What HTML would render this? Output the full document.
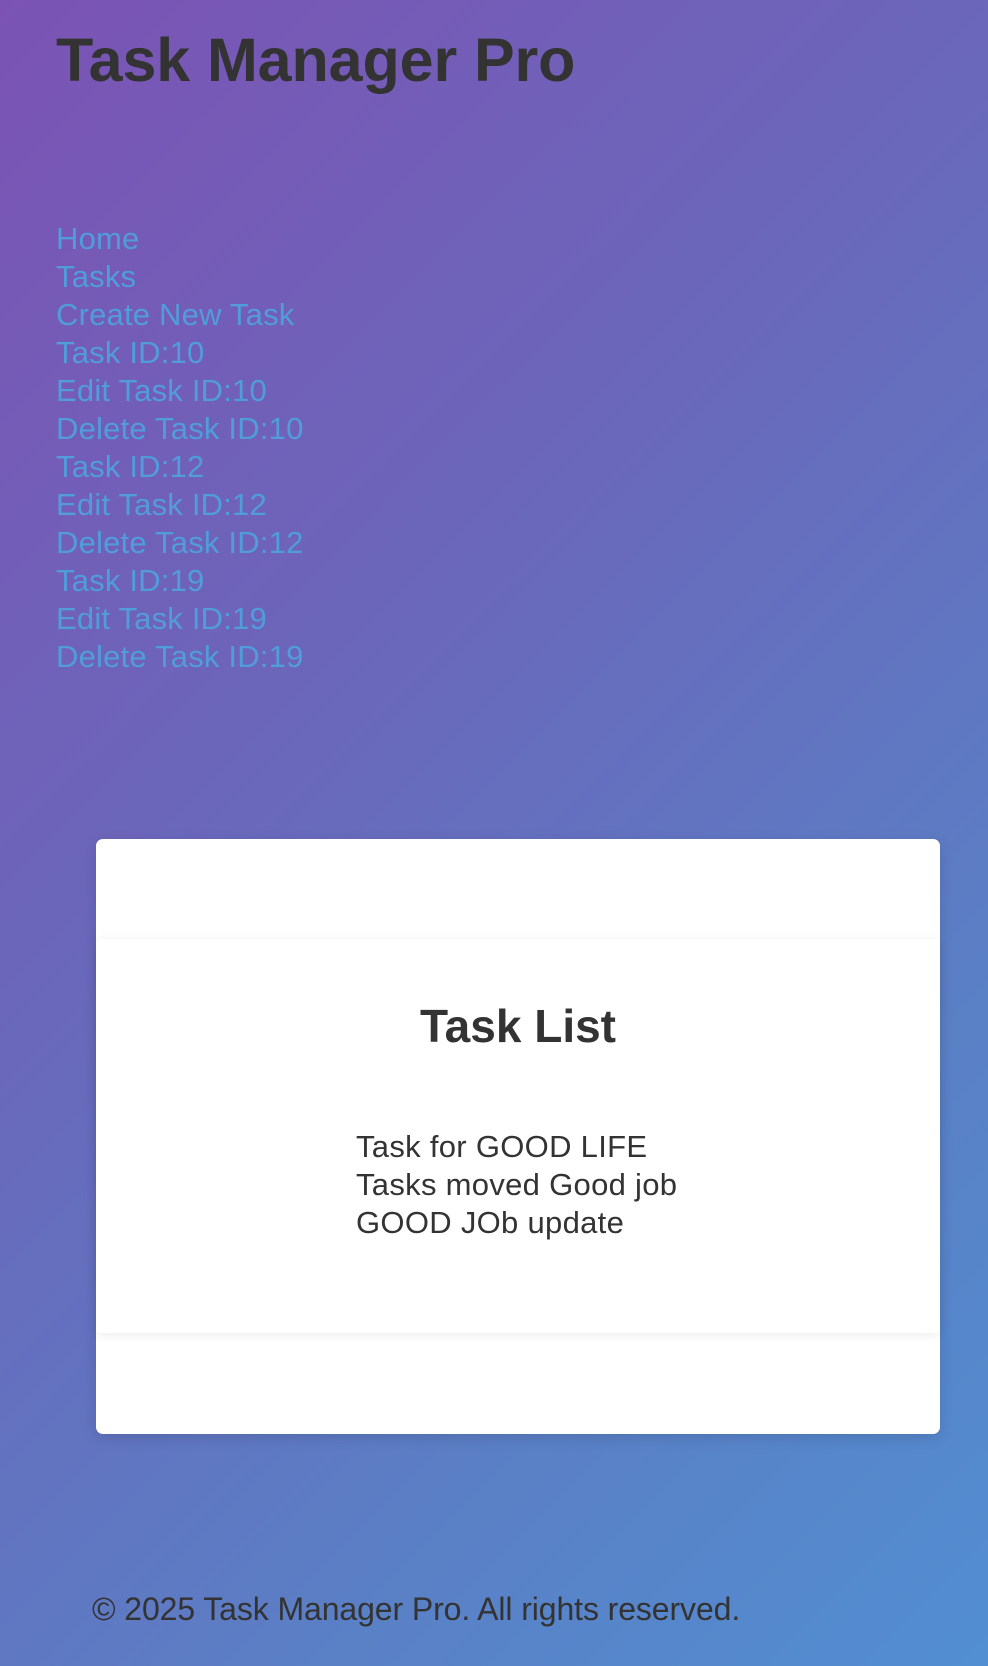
<!DOCTYPE html>
<html><head><meta charset="utf-8"><style>
html,body{margin:0;padding:0}
body{width:988px;height:1666px;overflow:hidden;background:linear-gradient(135deg,#7b53b4 0%,#6a68bb 40%,#5a80c6 75%,#528ed2 100%);font-family:"Liberation Sans",sans-serif;color:#333;position:relative}
h1{position:absolute;left:56px;top:22px;margin:0;font-size:61px;font-weight:bold;letter-spacing:-0.1px;line-height:76px}
nav{position:absolute;left:56px;top:220px;font-size:31px;line-height:38px;letter-spacing:0.2px}
nav div{color:#519cdb}
.card{position:absolute;left:96px;top:839px;width:844px;height:595px;background:#fff;border-radius:7px;box-shadow:0 4px 14px rgba(0,0,0,.12)}
.inner{position:absolute;left:0;top:100px;width:844px;height:394px;background:#fff;box-shadow:0 2px 10px rgba(0,0,0,.08);border-radius:4px}
.inner h2{margin:0;position:absolute;top:60px;width:100%;text-align:center;font-size:46px;letter-spacing:0}
.items{position:absolute;left:260px;top:189px;font-size:31px;line-height:38px;letter-spacing:0.3px}
footer{position:absolute;left:92px;top:1591px;font-size:32px;letter-spacing:-0.1px}
</style></head><body>
<h1>Task Manager Pro</h1>
<nav>
<div>Home</div><div>Tasks</div><div>Create New Task</div><div>Task ID:10</div><div>Edit Task ID:10</div><div>Delete Task ID:10</div><div>Task ID:12</div><div>Edit Task ID:12</div><div>Delete Task ID:12</div><div>Task ID:19</div><div>Edit Task ID:19</div><div>Delete Task ID:19</div>
</nav>
<div class="card"><div class="inner"><h2>Task List</h2>
<div class="items"><div>Task for GOOD LIFE</div><div>Tasks moved Good job</div><div>GOOD JOb update</div></div></div></div>
<footer>© 2025 Task Manager Pro. All rights reserved.</footer>
</body></html>
